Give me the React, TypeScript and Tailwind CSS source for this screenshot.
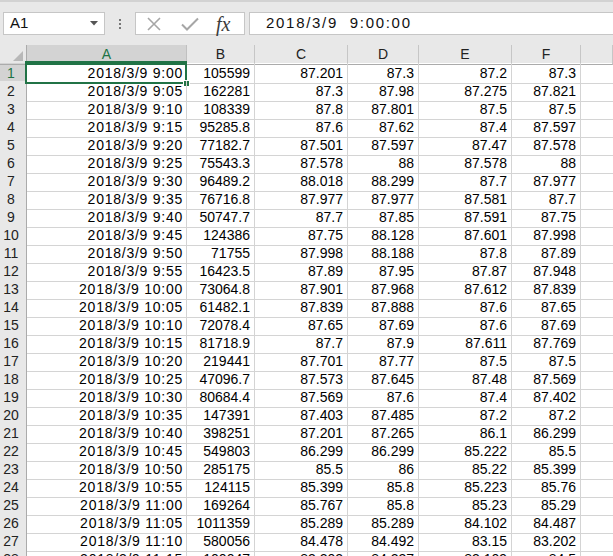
import React from 'react';

// sheet data, rows 1..28 (row 28 is cut by the window)
const rows: string[][] = [
  ['9:00', '105599', '87.201', '87.3', '87.2', '87.3'],
  ['9:05', '162281', '87.3', '87.98', '87.275', '87.821'],
  ['9:10', '108339', '87.8', '87.801', '87.5', '87.5'],
  ['9:15', '95285.8', '87.6', '87.62', '87.4', '87.597'],
  ['9:20', '77182.7', '87.501', '87.597', '87.47', '87.578'],
  ['9:25', '75543.3', '87.578', '88', '87.578', '88'],
  ['9:30', '96489.2', '88.018', '88.299', '87.7', '87.977'],
  ['9:35', '76716.8', '87.977', '87.977', '87.581', '87.7'],
  ['9:40', '50747.7', '87.7', '87.85', '87.591', '87.75'],
  ['9:45', '124386', '87.75', '88.128', '87.601', '87.998'],
  ['9:50', '71755', '87.998', '88.188', '87.8', '87.89'],
  ['9:55', '16423.5', '87.89', '87.95', '87.87', '87.948'],
  ['10:00', '73064.8', '87.901', '87.968', '87.612', '87.839'],
  ['10:05', '61482.1', '87.839', '87.888', '87.6', '87.65'],
  ['10:10', '72078.4', '87.65', '87.69', '87.6', '87.69'],
  ['10:15', '81718.9', '87.7', '87.9', '87.611', '87.769'],
  ['10:20', '219441', '87.701', '87.77', '87.5', '87.5'],
  ['10:25', '47096.7', '87.573', '87.645', '87.48', '87.569'],
  ['10:30', '80684.4', '87.569', '87.6', '87.4', '87.402'],
  ['10:35', '147391', '87.403', '87.485', '87.2', '87.2'],
  ['10:40', '398251', '87.201', '87.265', '86.1', '86.299'],
  ['10:45', '549803', '86.299', '86.299', '85.222', '85.5'],
  ['10:50', '285175', '85.5', '86', '85.22', '85.399'],
  ['10:55', '124115', '85.399', '85.8', '85.223', '85.76'],
  ['11:00', '169264', '85.767', '85.8', '85.23', '85.29'],
  ['11:05', '1011359', '85.289', '85.289', '84.102', '84.487'],
  ['11:10', '580056', '84.478', '84.492', '83.15', '83.202'],
  ['11:15', '100047', '83.202', '84.237', '83.109', '84.5'],
];

const cols = 'grid grid-cols-[27px_160px_68px_93px_71px_93px_69px_1fr]';

const Toolbar = () => (
  <div className="h-[45px] bg-[#e8e8e8] border-t-2 border-[#d2d2d2] flex items-start pt-[10px]">
    <div className="ml-[3px] w-[102px] h-[23px] bg-white border border-[#c6c6c6] flex items-center pl-[6px] pr-[6px] text-[15px] text-[#111]">
      <span className="flex-1">A1</span>
      <svg width="8" height="5" viewBox="0 0 8 5"><path d="M0 0h8L4 4.5z" fill="#555" /></svg>
    </div>
    <div className="w-[30px] h-[23px] flex flex-col items-center justify-center gap-[2px]">
      <span className="w-[2px] h-[2px] bg-[#777]" />
      <span className="w-[2px] h-[2px] bg-[#777]" />
      <span className="w-[2px] h-[2px] bg-[#777]" />
    </div>
    <div className="w-[110px] h-[23px] bg-white border border-[#c6c6c6] flex items-center pl-[10px]">
      <svg width="16" height="16" viewBox="0 0 16 16">
        <path d="M2 2L14 14M14 2L2 14" stroke="#a6a6a6" strokeWidth="1.6" />
      </svg>
      <svg width="20" height="16" viewBox="0 0 20 16" className="ml-[18px]">
        <path d="M2 8.5L7 13.5L18 2.5" stroke="#a6a6a6" strokeWidth="2" fill="none" />
      </svg>
      <span className="ml-[16px] font-['Liberation_Serif',serif] italic text-[20px] leading-none text-[#3c3c3c]">fx</span>
    </div>
    <div className="ml-[4px] flex-1 h-[23px] bg-white border border-r-0 border-[#c6c6c6] flex items-center pl-[16px] text-[15px] tracking-[1.7px] text-[#111] whitespace-pre">
      2018/3/9  9:00:00
    </div>
  </div>
);

const ColHeaders = () => (
  <div className={cols + ' h-[18px] bg-[#e8e8e8] text-[14px] text-[#222]'}>
    <div className="relative border-r border-b border-[#ababab]">
      <svg width="10" height="10" viewBox="0 0 10 10" className="absolute right-[3px] bottom-[3px]">
        <path d="M10 0V10H0z" fill="#b8b8b8" />
      </svg>
    </div>
    <div className="bg-[#d3d3d3] text-[#217346] border-r border-[#c0c0c0] shadow-[inset_0_-2px_0_#217346] text-center leading-[19px]">A</div>
    {['B', 'C', 'D', 'E', 'F', ''].map((c, i) => (
      <div key={i} className="border-r border-b border-r-[#c6c6c6] border-b-[#ababab] text-center leading-[19px]">{c}</div>
    ))}
  </div>
);

const Row = ({ n, r }: { n: number; r: string[] }) => {
  const sel = n === 1;
  return (
    <div className={cols + ' h-[18px] text-[14px] text-black'}>
      <div className={(sel ? 'bg-[#d3d3d3] text-[#217346] ' : 'bg-[#e8e8e8] text-[#222] ') + 'border-r border-b border-r-[#ababab] border-b-[#cfcfcf] text-center pr-[4px] leading-[20px] overflow-hidden'}>
        {n}
      </div>
      <div className="relative border-r border-b border-[#d4d4d4] text-right pr-[3px] leading-[20px] tracking-[0.75px] whitespace-nowrap overflow-visible">
        2018/3/9 {r[0]}
        {sel && (
          <>
            <div className="absolute left-[-2px] top-[-2px] right-[-1px] bottom-[-1px] border-2 border-[#217346]" />
            <div className="absolute right-[-4px] bottom-[-4px] w-[7px] h-[7px] bg-[#217346] border border-white" />
          </>
        )}
      </div>
      {r.slice(1).map((v, i) => (
        <div key={i} className="border-r border-b border-[#d4d4d4] text-right pr-[4px] leading-[20px] overflow-hidden whitespace-nowrap">
          {v}
        </div>
      ))}
      <div className="border-b border-[#d4d4d4]" />
    </div>
  );
};

export default function App() {
  return (
    <div className="w-[613px] h-[556px] overflow-hidden bg-white font-['Liberation_Sans',Arial,sans-serif]">
      <Toolbar />
      <ColHeaders />
      <div>
        {rows.map((r, i) => (
          <Row key={i} n={i + 1} r={r} />
        ))}
      </div>
    </div>
  );
}
